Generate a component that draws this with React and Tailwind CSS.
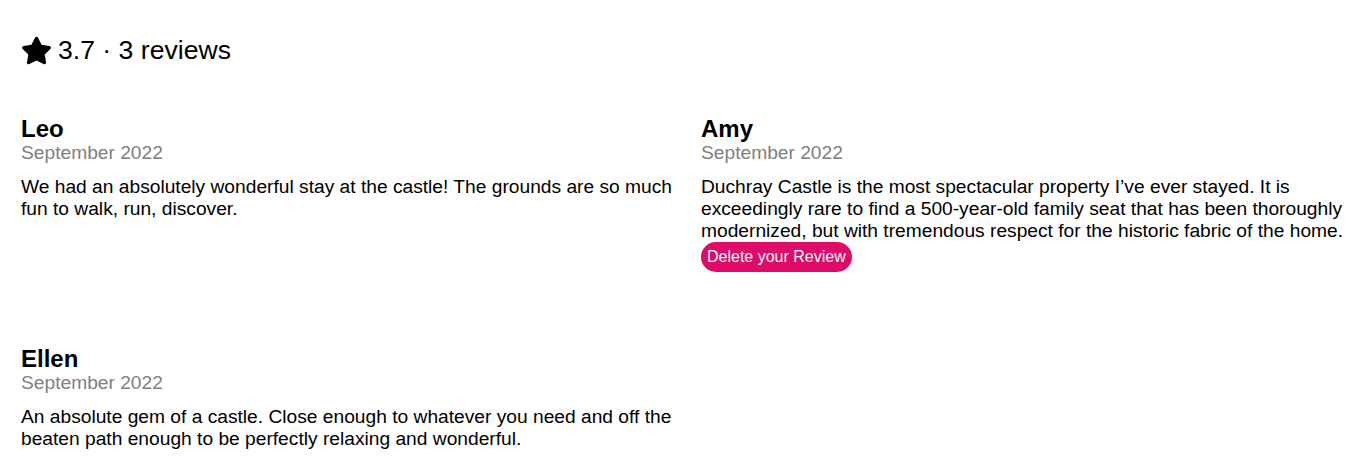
import React from 'react';
import { FaStar } from 'react-icons/fa';

const reviews = [
    {
        id: 1,
        name: 'Leo',
        date: 'September 2022',
        text: 'We had an absolutely wonderful stay at the castle! The grounds are so much fun to walk, run, discover.',
        mine: false,
    },
    {
        id: 2,
        name: 'Amy',
        date: 'September 2022',
        text: 'Duchray Castle is the most spectacular property I\u2019ve ever stayed. It is exceedingly rare to find a 500-year-old family seat that has been thoroughly modernized, but with tremendous respect for the historic fabric of the home.',
        mine: true,
    },
    {
        id: 3,
        name: 'Ellen',
        date: 'September 2022',
        text: 'An absolute gem of a castle. Close enough to whatever you need and off the beaten path enough to be perfectly relaxing and wonderful.',
        mine: false,
    },
];

const ReviewCard = ({ review }) => (
    <div className="flex flex-col items-start">
        <h3 className="text-[24px] leading-[27px] font-bold text-black">{review.name}</h3>
        <p className="text-[19.2px] leading-[22px] text-[#808080]">{review.date}</p>
        <p className="mt-[12px] text-[19.2px] leading-[22px] text-black">{review.text}</p>
        {review.mine && (
            <button className="rounded-full bg-[#de0b69] px-[6px] py-[4px] text-[16px] leading-[22px] text-white">
                Delete your Review
            </button>
        )}
    </div>
);

const App = () => {
    return (
        <div className="min-h-screen bg-white px-[21px] pt-[32px] font-['Liberation_Sans',Arial,sans-serif]">
            <div className="flex items-center gap-[6px] text-[26.6px] leading-[36px] text-black">
                <FaStar size={31} />
                <span>3.7 · 3 reviews</span>
            </div>
            <div className="mt-[47px] grid grid-cols-[660px_660px] gap-x-[20px] gap-y-[73px]">
                {reviews.map(review => (
                    <ReviewCard key={review.id} review={review} />
                ))}
            </div>
        </div>
    );
};

export default App;
